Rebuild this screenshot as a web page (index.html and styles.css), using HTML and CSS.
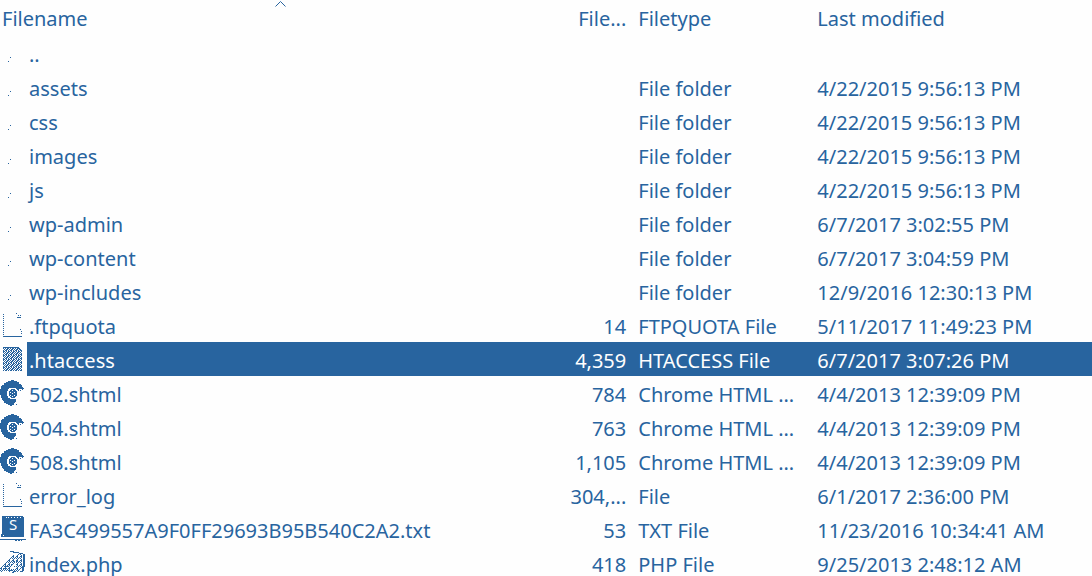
FILE: index.html
```
<!DOCTYPE html>
<html lang="en">
<head>
<meta charset="utf-8">
<title>Remote files</title>
<link rel="stylesheet" href="styles.css">
</head>
<body>
<svg class="defs" aria-hidden="true">
  <defs>
    <pattern id="dither" width="5" height="4" patternUnits="userSpaceOnUse">
      <path fill="#28649f" d="M0 0h2v1H0zM3 0h1v1H3zM1 1h1v1H1zM3 1h2v1H3zM0 2h1v1H0zM2 2h2v1H2zM1 3h2v1H1zM4 3h1v1H4z"/>
    </pattern>
    <pattern id="checker" width="4" height="4" patternUnits="userSpaceOnUse">
      <path fill="#28649f" d="M0 0h1v1H0zM2 0h1v1H2zM1 1h1v1H1zM0 2h2v1H0zM3 3h1v1H3zM1 3h1v1H1z"/>
    </pattern>
    <symbol id="folder" viewBox="0 0 27 34">
      <path fill="#28649f" d="M10 21h1v1h-1zM8 25h1v1H8z"/>
    </symbol>
    <symbol id="file" viewBox="0 0 27 34">
      <path fill="#28649f" d="M3 6h1v1H3zM3 8h1v1H3zM3 10h1v1H3zM3 12h1v1H3zM3 14h1v1H3zM3 16h1v1H3zM3 18h1v1H3zM3 20h1v1H3zM3 22h1v1H3zM3 24h1v1H3zM3 26h1v1H3z"/>
      <path fill="#28649f" d="M3 28h19v1H3zM16 5h1v1h-1zM18 7h1v1h-1zM20 7h1v1h-1zM17 9h4v1h-4zM20 21h1v1h-1zM21 23h1v1h-1zM21 25h1v1h-1z"/>
    </symbol>
    <symbol id="selected-file" viewBox="0 0 27 34">
      <path fill="url(#dither)" d="M3 5h15l4 4v20H3z"/>
      <path fill="#28649f" d="M3 5h15v1H3zM18 6h2v1h-2zM19 7h2v1h-2zM20 8h1v1h-1z"/>
    </symbol>
    <symbol id="chrome" viewBox="0 0 27 34">
      <path fill="#28649f" d="M11 4h3v1h3v1h2v2h2v1h1v2h1v1h1v1h-5v1h-2v-1h-1v-1H9v1H8v2H7v5h1v2h2v1h6v3h-1v1h-1v2h-2v1h-2v-1H8v-1H6v-1H4v-2H3v-1H2v-2H1v-3H0v-6h1v-3h1V9h2V7h2V6h2V5h3z"/>
      <path fill="#28649f" d="M11 13h4v1h1v1h1v5h-1v1h-1v1h-4v-1h-1v-1H9v-5h1v-1h1zM18 14h1v1h-1zM20 14h1v1h-1zM22 13h1v1h-1zM16 28h1v1h-1z"/>
      <path fill="#fff" d="M12 14h1v1h-1zM10 16h1v1h-1zM14 16h1v1h-1zM12 17h1v1h-1zM10 19h1v1h-1zM14 19h1v1h-1zM12 20h1v1h-1z"/>
    </symbol>
    <symbol id="text-doc" viewBox="0 0 27 34">
      <path fill="#28649f" d="M2 4h21v1h1v20H1v-3h1zM0 27h26v1H0zM15 28h2v1h-2zM18 28h2v1h-2zM21 28h1v1h-1z"/>
      <path fill="#fff" d="M6 5h1v1H6zM8 5h1v1H8zM11 5h1v1h-1zM14 5h1v1h-1zM17 5h1v1h-1zM20 5h1v1h-1zM3 23h1v1H3z"/>
      <text class="badge-letter" x="13" y="18" text-anchor="middle">S</text>
    </symbol>
    <symbol id="php" viewBox="0 0 27 34">
      <path fill="url(#checker)" d="M0 21l5-4 5-5 4-3 8-1v13l-3 5-8 1-4-2-7 1z"/>
      <path fill="#28649f" d="M10 5h4v1h-4zM13 6h6v1h-6zM19 7h4v1h-4zM23 8h2v13h-1v4h-1v1h-3v-1h2v-5h1zM5 20h3v1H5zM3 22h4v1H3zM11 18h2v1h-2zM14 15h3v1h-3zM9 24h3v1H9zM14 25h2v1h-2z"/>
      <path fill="#fff" d="M11 20h2v-2h2v-3h1v5h-2v3h-3z"/>
    </symbol>
  </defs>
</svg>
<table class="files">
  <colgroup><col class="col-name"><col class="col-size"><col class="col-type"><col></colgroup>
  <thead>
    <tr>
      <th class="name-head" scope="col" aria-sort="ascending">Filename
        <svg class="sort" viewBox="0 0 12 7" aria-hidden="true"><path fill="none" stroke="#28649f" d="M.5 6.500l5-5 5 5"/></svg>
      </th>
      <th class="size" scope="col">File...</th><th scope="col">Filetype</th><th scope="col">Last modified</th>
    </tr>
  </thead>
  <tbody>
    <tr><td><div class="entry"><svg class="icon"><use href="#folder"/></svg><span>..</span></div></td><td class="size"></td><td></td><td></td></tr>
    <tr><td><div class="entry"><svg class="icon"><use href="#folder"/></svg><span>assets</span></div></td><td class="size"></td><td>File folder</td><td>4/22/2015 9:56:13 PM</td></tr>
    <tr><td><div class="entry"><svg class="icon"><use href="#folder"/></svg><span>css</span></div></td><td class="size"></td><td>File folder</td><td>4/22/2015 9:56:13 PM</td></tr>
    <tr><td><div class="entry"><svg class="icon"><use href="#folder"/></svg><span>images</span></div></td><td class="size"></td><td>File folder</td><td>4/22/2015 9:56:13 PM</td></tr>
    <tr><td><div class="entry"><svg class="icon"><use href="#folder"/></svg><span>js</span></div></td><td class="size"></td><td>File folder</td><td>4/22/2015 9:56:13 PM</td></tr>
    <tr><td><div class="entry"><svg class="icon"><use href="#folder"/></svg><span>wp-admin</span></div></td><td class="size"></td><td>File folder</td><td>6/7/2017 3:02:55 PM</td></tr>
    <tr><td><div class="entry"><svg class="icon"><use href="#folder"/></svg><span>wp-content</span></div></td><td class="size"></td><td>File folder</td><td>6/7/2017 3:04:59 PM</td></tr>
    <tr><td><div class="entry"><svg class="icon"><use href="#folder"/></svg><span>wp-includes</span></div></td><td class="size"></td><td>File folder</td><td>12/9/2016 12:30:13 PM</td></tr>
    <tr><td><div class="entry"><svg class="icon"><use href="#file"/></svg><span>.ftpquota</span></div></td><td class="size">14</td><td>FTPQUOTA File</td><td>5/11/2017 11:49:23 PM</td></tr>
    <tr class="selected" aria-selected="true"><td><div class="entry"><svg class="icon"><use href="#selected-file"/></svg><span>.htaccess</span></div></td><td class="size">4,359</td><td>HTACCESS File</td><td>6/7/2017 3:07:26 PM</td></tr>
    <tr><td><div class="entry"><svg class="icon"><use href="#chrome"/></svg><span>502.shtml</span></div></td><td class="size">784</td><td>Chrome HTML ...</td><td>4/4/2013 12:39:09 PM</td></tr>
    <tr><td><div class="entry"><svg class="icon"><use href="#chrome"/></svg><span>504.shtml</span></div></td><td class="size">763</td><td>Chrome HTML ...</td><td>4/4/2013 12:39:09 PM</td></tr>
    <tr><td><div class="entry"><svg class="icon"><use href="#chrome"/></svg><span>508.shtml</span></div></td><td class="size">1,105</td><td>Chrome HTML ...</td><td>4/4/2013 12:39:09 PM</td></tr>
    <tr><td><div class="entry"><svg class="icon"><use href="#file"/></svg><span>error_log</span></div></td><td class="size">304,...</td><td>File</td><td>6/1/2017 2:36:00 PM</td></tr>
    <tr><td><div class="entry"><svg class="icon"><use href="#text-doc"/></svg><span>FA3C499557A9F0FF29693B95B540C2A2.txt</span></div></td><td class="size">53</td><td>TXT File</td><td>11/23/2016 10:34:41 AM</td></tr>
    <tr><td><div class="entry"><svg class="icon"><use href="#php"/></svg><span>index.php</span></div></td><td class="size">418</td><td>PHP File</td><td>9/25/2013 2:48:12 AM</td></tr>
  </tbody>
</table>
</body>
</html>
```
FILE: styles.css
```
body {
  margin: 0;
  height: 100vh;
  overflow: hidden;
  background: #fefefe;
  color: #28649f;
  font: 20px/30px "Noto Sans", "Open Sans", sans-serif;
}

.defs {
  position: absolute;
  width: 0;
  height: 0;
}

.files {
  width: 100%;
  table-layout: fixed;
  border-collapse: collapse;
  white-space: nowrap;
}

.col-name { width: 51.5%; }
.col-size { width: 6.4%; }
.col-type { width: 16.4%; }

th,
td {
  padding: 4px 6px 0;
  font-weight: 400;
  text-align: left;
}

th { padding-bottom: 2px; }
td:first-child { padding: 0; }
.files .size { text-align: right; }

.files .name-head {
  position: relative;
  padding-left: 2px;
}

.sort {
  position: absolute;
  top: 0;
  left: 50%;
  width: 12px;
  height: 7px;
  margin-left: -6px;
}

.entry {
  display: flex;
  height: 34px;
}

.icon {
  flex: none;
  width: 27px;
  height: 34px;
  background: #fefefe;
  shape-rendering: crispEdges;
}

.entry span {
  padding: 4px 0 0 2px;
}

.badge-letter {
  fill: #fefefe;
  font-size: 15px;
}

.selected {
  background: #28649f;
  color: #fefefe;
}
```
